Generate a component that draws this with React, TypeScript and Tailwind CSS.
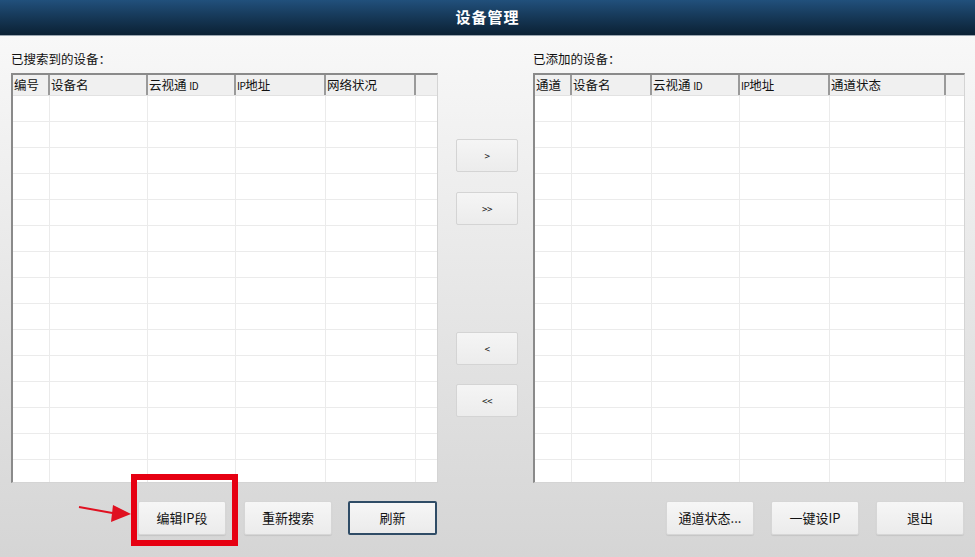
import React from 'react';

type Col = { label: React.ReactNode; w: number };

const small = (s: string) => <span className="text-[10px] tracking-tighter">{s}</span>;

const leftCols: Col[] = [
  { label: '编号', w: 37 },
  { label: '设备名', w: 98 },
  { label: <>云视通 {small('ID')}</>, w: 88 },
  { label: <>{small('IP')}地址</>, w: 90 },
  { label: '网络状况', w: 90 },
];

const rightCols: Col[] = [
  { label: '通道', w: 37 },
  { label: '设备名', w: 80 },
  { label: <>云视通 {small('ID')}</>, w: 88 },
  { label: <>{small('IP')}地址</>, w: 90 },
  { label: '通道状态', w: 116 },
];

const rows = Array.from({ length: 15 });

function DeviceTable({ cols }: { cols: Col[] }) {
  return (
    <div className="h-[410px] overflow-hidden bg-white border-t-2 border-l-2 border-t-[#8a8a8a] border-l-[#8a8a8a] border-r border-b border-r-[#d4d4d4] border-b-[#d4d4d4]">
      <div className="flex h-[21px] bg-[#f0f0f0] border-b border-[#e2e2e2]">
        {cols.map((c, i) => (
          <div
            key={i}
            style={{ width: c.w }}
            className="shrink-0 border-r-2 border-[#9a9a9a] pl-[1px] text-[12.5px] leading-[20px] text-[#111] whitespace-nowrap overflow-hidden"
          >
            {c.label}
          </div>
        ))}
        <div className="flex-1" />
      </div>
      {rows.map((_, r) => (
        <div key={r} className="flex h-[26px] border-b border-[#ebebeb]">
          {cols.map((c, i) => (
            <div key={i} style={{ width: c.w }} className="shrink-0 border-r border-[#ebebeb]" />
          ))}
          <div className="flex-1" />
        </div>
      ))}
    </div>
  );
}

function Btn({ children, focused, className = '' }: { children: React.ReactNode; focused?: boolean; className?: string }) {
  return (
    <button
      className={`h-[34px] rounded-[2px] bg-gradient-to-b from-[#f6f6f6] to-[#ebebeb] text-[13px] text-[#111] ${
        focused ? 'border-2 border-[#2f4c66]' : 'border border-[#d6d6d6] shadow-[0_1px_1px_rgba(0,0,0,0.08)]'
      } ${className}`}
    >
      {children}
    </button>
  );
}

function MoveBtn({ children, className = '' }: { children: React.ReactNode; className?: string }) {
  return (
    <button
      className={`w-[62px] h-[33px] rounded-[2px] bg-gradient-to-b from-[#f5f5f5] to-[#ececec] border border-[#d4d4d4] text-[10px] text-[#111] tracking-tighter ${className}`}
    >
      {children}
    </button>
  );
}

export default function App() {
  return (
    <div
      className="relative w-[975px] h-[557px] overflow-hidden flex flex-col"
      style={{ fontFamily: '"Noto Sans CJK SC", "Liberation Sans", sans-serif' }}
    >
      <div className="h-[36px] shrink-0 bg-gradient-to-b from-[#21507c] to-[#0b2134] border-b border-[#9aa6b0] flex items-center justify-center">
        <span className="text-white text-[15px] font-bold tracking-[1px]">设备管理</span>
      </div>

      <div className="flex-1 flex pl-[11px] pt-[15px] bg-gradient-to-b from-[#f8f8f8] to-[#d5d5d5]">
        <div className="w-[427px] shrink-0 flex flex-col">
          <div className="h-[22px] text-[12.5px] leading-[16px] text-[#111]">已搜索到的设备：</div>
          <DeviceTable cols={leftCols} />
          <div className="flex justify-end mt-[18px] pr-[1px]">
            <Btn className="w-[88px]">编辑IP段</Btn>
            <Btn className="w-[88px] ml-[18px]">重新搜索</Btn>
            <Btn className="w-[89px] ml-[16px]" focused>
              刷新
            </Btn>
          </div>
        </div>

        <div className="w-[95px] shrink-0 flex flex-col pl-[18px] pt-[88px]">
          <MoveBtn>&gt;</MoveBtn>
          <MoveBtn className="mt-[20px]">&gt;&gt;</MoveBtn>
          <MoveBtn className="mt-[107px]">&lt;</MoveBtn>
          <MoveBtn className="mt-[19px]">&lt;&lt;</MoveBtn>
        </div>

        <div className="w-[432px] shrink-0 flex flex-col">
          <div className="h-[22px] text-[12.5px] leading-[16px] text-[#111]">已添加的设备：</div>
          <DeviceTable cols={rightCols} />
          <div className="flex justify-end mt-[18px] pr-[1px]">
            <Btn className="w-[88px]">通道状态...</Btn>
            <Btn className="w-[88px] ml-[17px]">一键设IP</Btn>
            <Btn className="w-[88px] ml-[17px]">退出</Btn>
          </div>
        </div>
      </div>

      {/* annotation */}
      <div className="absolute left-[131px] top-[474px] w-[107px] h-[72px] border-[6px] border-[#e60012]" />
      <svg className="absolute left-[76px] top-[500px]" width="60" height="26" viewBox="0 0 60 26">
        <line x1="3" y1="7" x2="42" y2="14" stroke="#e01020" strokeWidth="2" />
        <polygon points="37,5 55,14 35,22" fill="#e01020" />
      </svg>
    </div>
  );
}
